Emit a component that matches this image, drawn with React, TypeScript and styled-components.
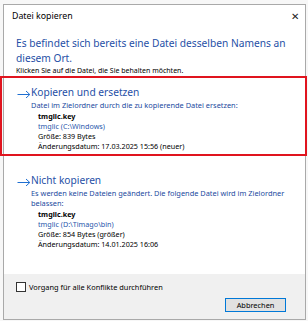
import React from 'react';
import styled, { createGlobalStyle } from 'styled-components';

const GlobalStyle = createGlobalStyle`
  html, body {
    margin: 0;
    padding: 0;
    background: #f7f7f7;
  }
  body {
    font-family: 'Noto Sans', 'Open Sans', sans-serif;
  }
`;

const Window = styled.div`
  margin: 4px 2px 1px 3px;
  height: 316px;
  box-sizing: border-box;
  border: 1px solid #a9a9a9;
  background: #fff;
  display: flex;
  flex-direction: column;
  color: #000;
`;

const TitleBar = styled.div`
  height: 21px;
  display: flex;
  align-items: center;
  justify-content: space-between;
  padding: 0 6px 0 8px;
  font-size: 8.8px;
`;

const Close = styled.span`
  font-size: 10px;
  font-weight: 300;
  color: #222;
`;

const Content = styled.div`
  flex: 1;
  padding: 10px 0 0 0;
`;

const Heading = styled.div`
  color: #1f4fa6;
  font-size: 10.2px;
  line-height: 15px;
  padding: 0 11px 0 12px;
`;

const Hint = styled.div`
  font-size: 7px;
  line-height: 10px;
  padding-left: 12px;
`;

const Option = styled.div<{ $selected?: boolean }>`
  margin: 0 -2px 0 -4px;
  border: 2px solid ${(p) => (p.$selected ? '#e0141e' : 'transparent')};
  padding: 7px 8px 3px 15px;
  & + & {
    margin-top: 8px;
  }
`;

const OptionTitle = styled.div`
  display: flex;
  align-items: center;
  color: #1f4fa6;
  font-size: 10.2px;
  line-height: 15px;
`;

const Arrow = styled.svg`
  width: 14px;
  height: 8px;
  margin-top: 2px;
`;

const Desc = styled.div`
  color: #1c4aa0;
  font-size: 7.4px;
  line-height: 10px;
  padding-left: 14px;
`;

const FileInfo = styled.div`
  padding: 1px 0 0 21px;
  font-size: 7.2px;
  line-height: 10px;
`;

const FileName = styled.div`
  font-weight: 700;
`;

const FilePath = styled.div`
  color: #2a58ac;
`;

const Footer = styled.div`
  height: 45px;
  background: #f0f0f0;
  display: flex;
  flex-direction: column;
  padding: 8px 19px 0 12px;
  box-sizing: border-box;
`;

const CheckRow = styled.label`
  display: flex;
  align-items: center;
  gap: 3px;
  font-size: 7.4px;
  line-height: 10px;
`;

const Box = styled.span`
  width: 8px;
  height: 8px;
  border: 1px solid #333;
  background: #fff;
`;

const Button = styled.button`
  align-self: flex-end;
  margin-top: 6px;
  width: 61px;
  height: 14px;
  padding: 0;
  border: 1px solid #0078d7;
  background: #e1e1e1;
  font-family: 'Noto Sans', sans-serif;
  font-size: 7.4px;
  color: #000;
`;

const ArrowIcon = () => (
  <Arrow viewBox="0 0 14 8">
    <path d="M0.5 4.5 H12.5 M9 1 L12.8 4.5 L9 8" fill="none" stroke="#1f6fd1" strokeWidth="1" />
  </Arrow>
);

const App: React.FC = () => (
  <>
    <GlobalStyle />
    <Window>
      <TitleBar>
        <span>Datei kopieren</span>
        <Close>✕</Close>
      </TitleBar>
      <Content>
        <Heading>Es befindet sich bereits eine Datei desselben Namens an diesem Ort.</Heading>
        <Hint>Klicken Sie auf die Datei, die Sie behalten möchten.</Hint>
        <Option $selected>
          <OptionTitle>
            <ArrowIcon />
            Kopieren und ersetzen
          </OptionTitle>
          <Desc>Datei im Zielordner durch die zu kopierende Datei ersetzen:</Desc>
          <FileInfo>
            <FileName>tmglic.key</FileName>
            <FilePath>tmglic (C:\Windows)</FilePath>
            <div>Größe: 839 Bytes</div>
            <div>Änderungsdatum: 17.03.2025 15:56 (neuer)</div>
          </FileInfo>
        </Option>
        <Option>
          <OptionTitle>
            <ArrowIcon />
            Nicht kopieren
          </OptionTitle>
          <Desc>Es werden keine Dateien geändert. Die folgende Datei wird im Zielordner belassen:</Desc>
          <FileInfo>
            <FileName>tmglic.key</FileName>
            <FilePath>tmglic (D:\Timago\bin)</FilePath>
            <div>Größe: 854 Bytes (größer)</div>
            <div>Änderungsdatum: 14.01.2025 16:06</div>
          </FileInfo>
        </Option>
      </Content>
      <Footer>
        <CheckRow>
          <Box />
          Vorgang für alle Konflikte durchführen
        </CheckRow>
        <Button>Abbrechen</Button>
      </Footer>
    </Window>
  </>
);

export default App;
